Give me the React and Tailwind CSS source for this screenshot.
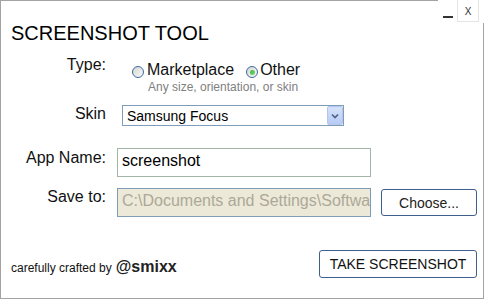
import React from "react";

function Radio({ checked }) {
  return (
    <span className="relative mt-[5px] flex h-[12px] w-[12px] shrink-0 items-center justify-center rounded-full border border-[#3d6aa3] bg-gradient-to-br from-[#d4d4d0] to-[#fbfbf9]">
      {checked && (
        <span className="h-[5px] w-[5px] rounded-full bg-gradient-to-br from-[#2fb52f] to-[#7fd87f]" />
      )}
    </span>
  );
}

export default function App() {
  return (
    <div
      className="relative h-[299px] w-[484px] border border-[#a3a3a3] bg-white text-[#111]"
      style={{ fontFamily: '"Liberation Sans", Arial, sans-serif' }}
    >
      {/* window controls overlay */}
      <div className="absolute right-[-1px] top-[-1px] flex h-[23px] w-[46px] items-start bg-white">
        <div className="mt-[16px] ml-[5px] h-[2px] w-[10px] bg-[#333]" />
        <div className="ml-[4px] flex h-[22px] w-[22px] items-start justify-center border-x border-b border-[#e4e4e4] pt-[6px] text-[10px] leading-[12px] text-[#333]">
          X
        </div>
      </div>

      <div className="flex flex-col pl-[10px]">
        <div className="mt-[21px] text-[20px] leading-[23px] text-black">SCREENSHOT TOOL</div>

        {/* Type */}
        <div className="mt-[11px] flex items-start">
          <div className="w-[95px] text-right text-[16px] leading-[18px]">Type:</div>
          <div className="ml-[26px] mt-[5px] flex flex-col">
            <div className="flex items-start text-[16px] leading-[18px]">
              <Radio />
              <span className="ml-[3px]">Marketplace</span>
              <span className="ml-[12px] flex items-start">
                <Radio checked />
                <span className="ml-[2px]">Other</span>
              </span>
            </div>
            <div className="ml-[16px] mt-[1px] text-[12px] leading-[14px] text-[#808080]">
              Any size, orientation, or skin
            </div>
          </div>
        </div>

        {/* Skin */}
        <div className="mt-[11px] flex items-start">
          <div className="w-[95px] text-right text-[16px] leading-[18px]">Skin</div>
          <div className="ml-[16px] flex h-[21px] w-[222px] items-center justify-between border border-[#7f9db9] bg-white">
            <span className="pl-[4px] text-[14px] leading-[16px] text-black">Samsung Focus</span>
            <span className="flex h-[19px] w-[16px] items-center justify-center rounded-[2px] border border-[#b4c6ee] bg-gradient-to-b from-[#d6e2fb] to-[#b8cbf5]">
              <svg width="8" height="6" viewBox="0 0 8 6">
                <path d="M1 1.5 L4 4.5 L7 1.5" stroke="#4d6185" strokeWidth="1.6" fill="none" />
              </svg>
            </span>
          </div>
        </div>

        {/* App Name */}
        <div className="mt-[22px] flex items-start">
          <div className="mt-[1px] w-[95px] text-right text-[16px] leading-[18px]">App Name:</div>
          <div className="ml-[11px] h-[29px] w-[254px] border border-[#a2b6a8] bg-white pl-[4px] pt-[3px] text-[16px] leading-[18px] text-black">
            screenshot
          </div>
        </div>

        {/* Save to */}
        <div className="mt-[11px] flex items-start">
          <div className="w-[95px] text-right text-[16px] leading-[18px]">Save to:</div>
          <div className="ml-[11px] h-[29px] w-[254px] overflow-hidden whitespace-nowrap border border-[#7f9db9] bg-[#ece9d8] pl-[4px] pt-[3px] text-[16px] leading-[18px] text-[#aca899]">
            C:\Documents and Settings\Softwa
          </div>
          <div className="ml-[10px] mt-[1px] flex h-[27px] w-[96px] items-center justify-center rounded-[3px] border border-[#3f5f8d] bg-white text-[14px] leading-[16px] text-[#222]">
            Choose...
          </div>
        </div>

        {/* bottom */}
        <div className="mt-[33px] flex items-end justify-between pr-[6px]">
          <div className="mb-[2px] flex items-baseline">
            <span className="text-[12px] leading-[14px] text-[#111]">carefully crafted by</span>
            <span className="ml-[4px] text-[16px] font-bold leading-[18px] text-[#222]">@smixx</span>
          </div>
          <div className="flex h-[28px] w-[158px] items-center justify-center rounded-[3px] border border-[#3f5f8d] bg-white text-[14px] leading-[16px] text-[#111]">
            TAKE SCREENSHOT
          </div>
        </div>
      </div>
    </div>
  );
}
